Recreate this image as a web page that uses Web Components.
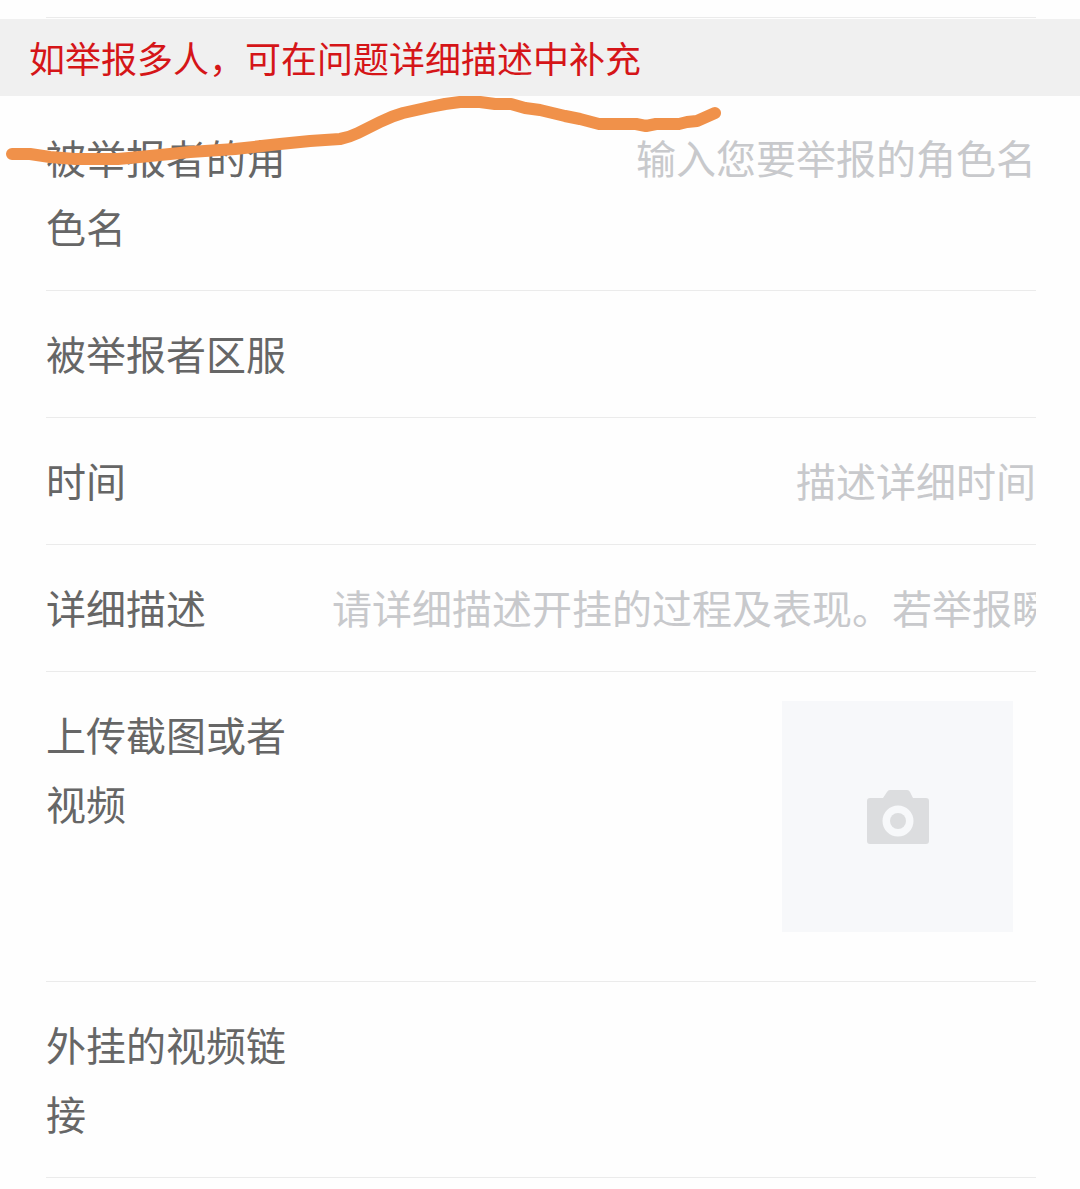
<!DOCTYPE html>
<html lang="zh-CN">
<head>
<meta charset="utf-8">
<meta name="viewport" content="width=device-width, initial-scale=1">
<title>举报</title>
<style>
	body {
		margin: 0;
		background: #fefefe;
		color: #666;
		font-family: "Noto Sans CJK SC", sans-serif;
		font-size: 40px;
	}
</style>
</head>
<body>
<report-form>
	<report-notice slot="notice">如举报多人，可在问题详细描述中补充</report-notice>
	<report-field label="被举报者的角色名" placeholder="输入您要举报的角色名"></report-field>
	<report-field label="被举报者区服"></report-field>
	<report-field label="时间" placeholder="描述详细时间"></report-field>
	<report-field label="详细描述" placeholder="请详细描述开挂的过程及表现。若举报瞬移"></report-field>
	<report-upload label="上传截图或者视频"></report-upload>
	<report-field label="外挂的视频链接"></report-field>
	<marker-stroke slot="marker"></marker-stroke>
</report-form>

<script>
/**
 * Styles shared by every row of the form.
 */
const rowStyle = `
	:host {
		display: block;
		border-bottom: 1px solid #ebebeb;
	}
	.row {
		display: grid;
		grid-template-columns: 260px minmax(0, 1fr);
		column-gap: 26px;
		align-items: start;
		padding: 28px 0 29px;
	}
	label {
		line-height: 69px;
	}
`;

class ReportForm extends HTMLElement {
	connectedCallback() {
		this.attachShadow( { mode: 'open' } ).innerHTML = `
			<style>
				:host {
					display: block;
					position: relative;
				}
				.divider {
					margin: 0 44px 1px 46px;
					padding-top: 17px;
					border-bottom: 1px solid #ebebeb;
				}
				form {
					margin: -1px 44px 0 46px;
				}
			</style>
			<div class="divider"></div>
			<slot name="notice"></slot>
			<form><slot></slot></form>
			<slot name="marker"></slot>
		`;
	}
}

class ReportNotice extends HTMLElement {
	connectedCallback() {
		this.attachShadow( { mode: 'open' } ).innerHTML = `
			<style>
				:host {
					display: block;
					padding: 10px 29px;
					background: #f0f0f0;
					color: #d51518;
					font-size: 36px;
					line-height: 57px;
				}
			</style>
			<slot></slot>
		`;
	}
}

class ReportField extends HTMLElement {
	connectedCallback() {
		const label = this.getAttribute( 'label' );
		const placeholder = this.getAttribute( 'placeholder' ) ?? '';

		this.attachShadow( { mode: 'open' } ).innerHTML = `
			<style>
				${ rowStyle }
				input {
					width: 100%;
					height: 69px;
					box-sizing: border-box;
					margin: 0;
					padding: 0;
					border: 0;
					outline: 0;
					background: transparent;
					color: inherit;
					font: inherit;
					line-height: 69px;
					text-align: right;
				}
				input::placeholder {
					color: #c8c9cc;
				}
			</style>
			<div class="row">
				<label for="field">${ label }</label>
				<input id="field" type="text" placeholder="${ placeholder }">
			</div>
		`;
	}
}

class ReportUpload extends HTMLElement {
	connectedCallback() {
		const label = this.getAttribute( 'label' );

		this.attachShadow( { mode: 'open' } ).innerHTML = `
			<style>
				${ rowStyle }
				button {
					display: grid;
					place-items: center;
					justify-self: end;
					width: 231px;
					height: 231px;
					margin: 1px 23px 20px 0;
					padding: 0;
					border: 0;
					background: #f7f8fa;
				}
				svg {
					display: block;
					width: 62px;
					height: 54px;
				}
			</style>
			<div class="row">
				<label for="upload">${ label }</label>
				<button id="upload" type="button">${ this.renderIcon() }</button>
			</div>
		`;
	}

	renderIcon() {
		return `<svg viewBox="0 0 62 54" aria-hidden="true">
			<path fill="#dcdddf" fill-rule="evenodd" d="M3 8H16L20 2Q21 0 23 0H40Q42 0 43 2L46 8H59Q62 8 62 11V51Q62 54 59 54H3Q0 54 0 51V11Q0 8 3 8ZM31 15.500A15.500 15.500 0 1 0 31 46.500A15.500 15.500 0 1 0 31 15.500Z" />
			<circle cx="31" cy="31" r="8" fill="#dcdddf" />
		</svg>`;
	}
}

/**
 * Freehand marker line drawn over the form.
 */
class MarkerStroke extends HTMLElement {
	connectedCallback() {
		this.attachShadow( { mode: 'open' } ).innerHTML = `
			<style>
				:host {
					position: absolute;
					top: 90px;
					left: 0;
					pointer-events: none;
				}
				svg {
					display: block;
				}
			</style>
			<svg width="730" height="80" viewBox="0 90 730 80" aria-hidden="true">
				<path fill="none" stroke="#f0914a" stroke-width="12" stroke-linecap="round" stroke-linejoin="round" d="M12 154H30L50 157L75 159H118L150 156L190 152L235 149L280 144L310 141L340 139Q350 137 358 133L380 122Q392 116 403 113L430 107L445 104L460 102H480L495 104H511L525 108L540 110L565 116L580 119L599 124H636L646 126L656 124H679L687 122L697 121L715 113" />
			</svg>
		`;
	}
}

customElements.define( 'report-form', ReportForm );
customElements.define( 'report-notice', ReportNotice );
customElements.define( 'report-field', ReportField );
customElements.define( 'report-upload', ReportUpload );
customElements.define( 'marker-stroke', MarkerStroke );
</script>
</body>
</html>
